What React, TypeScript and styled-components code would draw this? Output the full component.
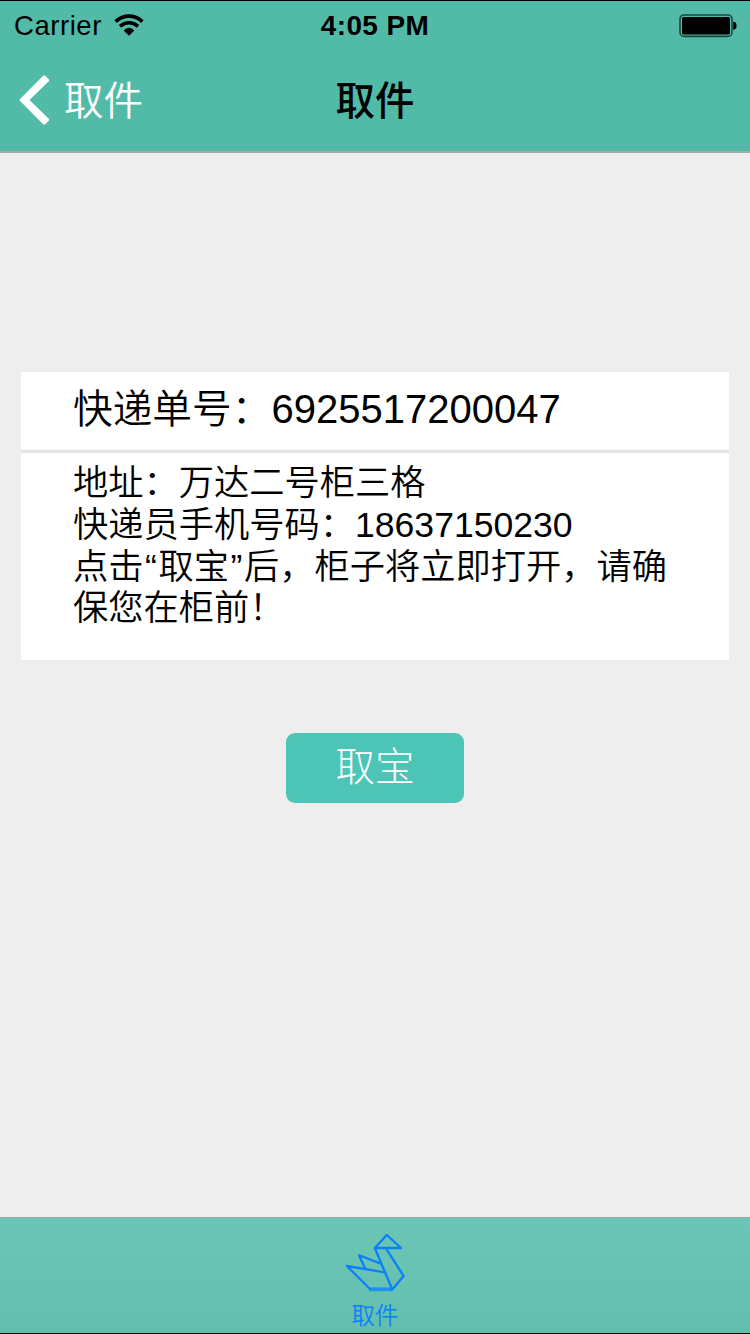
import React from 'react';
import styled, { createGlobalStyle } from 'styled-components';

const GlobalStyle = createGlobalStyle`
  * { box-sizing: border-box; }
  body {
    margin: 0;
    background: #eeeeee;
    font-family: "Liberation Sans", "Noto Sans CJK SC", sans-serif;
    color: #000;
  }
`;

const Screen = styled.div`
  width: 750px;
  height: 1334px;
  display: flex;
  flex-direction: column;
  background: #eeeeee;
  border-top: 1px solid #000;
  border-bottom: 1px solid #000;
  overflow: hidden;
`;

const Header = styled.header`
  height: 152px;
  flex: none;
  background: #51bba8;
  border-bottom: 2px solid #a5a9a8;
`;

const ThreeColumns = styled.div<{ $height: number }>`
  display: grid;
  grid-template-columns: 1fr auto 1fr;
  align-items: center;
  height: ${(p) => p.$height}px;
`;

const StatusLeft = styled.div`
  display: flex;
  align-items: center;
  gap: 12px;
  padding: 2px 0 0 14px;
  font-size: 27.5px;
  line-height: 46px;
  letter-spacing: 0.55px;

  svg {
    margin-top: -2px;
  }
`;

const Clock = styled.div`
  padding-top: 2px;
  font-size: 28px;
  line-height: 46px;
  font-weight: 700;
  letter-spacing: 0.4px;
`;

const StatusRight = styled.div`
  display: flex;
  justify-content: flex-end;
  padding: 1px 13px 0 0;
`;

const BackButton = styled.button`
  display: flex;
  align-items: center;
  gap: 14px;
  padding: 0 0 0 19px;
  border: 0;
  background: none;
  color: #fff;
  font-family: "Noto Sans CJK SC", sans-serif;
  font-size: 39.5px;
  font-weight: 350;
  line-height: 60px;
`;

const BackLabel = styled.span`
  margin-top: -4px;
`;

const Title = styled.h1`
  margin: 0;
  padding-top: 2px;
  font-size: 39.5px;
  font-weight: 500;
  line-height: 60px;
`;

const Main = styled.main`
  flex: 1;
  display: flex;
  flex-direction: column;
  align-items: center;
  padding: 219px 21px 0;
`;

const Card = styled.section`
  width: 708px;
  height: 288px;
  background: #fff;
`;

const ParcelNumber = styled.div`
  height: 77px;
  padding: 4px 0 0 52px;
  font-size: 40px;
  line-height: 60px;
  white-space: nowrap;
`;

const Divider = styled.div`
  height: 4px;
  background: linear-gradient(#f8f8f8, #e6e6e6 40%, #dedede 70%, #f2f2f2);
`;

const Details = styled.div`
  padding: 6px 0 0 52px;
  font-size: 35.6px;
`;

const Line = styled.div`
  height: 41.8px;
  line-height: 41.8px;
  white-space: nowrap;
`;

const Han = styled.span<{ $size: number }>`
  font-family: "Noto Sans CJK SC", sans-serif;
  font-size: ${(p) => p.$size}px;
  font-weight: 350;
`;

const Quote = styled.span`
  display: inline-block;
  width: 15px;
  text-align: center;
`;

const PickUpButton = styled.button`
  width: 178px;
  height: 70px;
  margin-top: 73px;
  padding: 0 0 2px;
  border: 0;
  border-radius: 9px;
  background: #4cc5b7;
  color: #fff;
  font-family: inherit;
  font-size: 39.5px;
  font-weight: 300;
  line-height: 60px;
`;

const TabBar = styled.nav`
  flex: none;
  height: 116px;
  display: flex;
  justify-content: center;
  border-top: 1px solid #9da5a3;
  background: linear-gradient(#6bc6b5, #63bead);
`;

const Tab = styled.a`
  display: flex;
  flex-direction: column;
  align-items: center;
  padding-top: 15px;
  color: #0c80fb;
  font-size: 23.5px;
  font-weight: 350;
  line-height: 30px;
`;

const TabLabel = styled.span`
  margin-top: 8px;
`;

const WifiIcon = () => (
  <svg width="30" height="22" viewBox="0 0 30 22">
    <g fill="none" stroke="#000" strokeWidth="3.6">
      <path d="M1.6 7.6Q7.5 2.1 15 2.1T28.4 7.6" />
      <path d="M6 12.4Q10 8.8 15 8.8T24 12.4" />
    </g>
    <path d="M9.6 16.4Q12 13.8 15 13.8T20.4 16.4L15 21.8Z" fill="#000" />
  </svg>
);

const BatteryIcon = () => (
  <svg width="58" height="24" viewBox="0 0 58 24">
    <rect x="1" y="1" width="52" height="21.4" rx="4" fill="none" stroke="#1d463f" strokeWidth="1.6" />
    <rect x="3" y="3" width="48" height="17.4" rx="1.5" fill="#000" />
    <path d="M54.2 7.8Q57.6 8 57.6 11.7T54.2 15.8Z" fill="#000" />
  </svg>
);

const BackIcon = () => (
  <svg width="31" height="50" viewBox="0 0 31 50">
    <path d="M24.4 .5H26L30 4.5V6L10.5 25L30 44V45.5L26 49.5H24.4L.6 25.6V24.4Z" fill="#fff" />
  </svg>
);

const SwanIcon = () => (
  <svg width="60" height="60" viewBox="0 0 60 60" fill="none" stroke="#0c80fb" strokeWidth="2.3" strokeLinejoin="round">
    <path d="M29.8 15L41.8 2L56 15Z" />
    <path d="M29.8 15L47.3 56.5L58.6 43L40.8 15" />
    <path d="M35.8 30.6L14 22.2L20 35.2" />
    <path d="M39.8 39.4L1.8 33L25 56" />
    <path d="M24 56.3H47.5" strokeWidth="3.8" strokeOpacity=".75" />
  </svg>
);

export default function App() {
  return (
    <>
      <GlobalStyle />
      <Screen>
        <Header>
          <ThreeColumns $height={48}>
            <StatusLeft>
              Carrier
              <WifiIcon />
            </StatusLeft>
            <Clock>4:05 PM</Clock>
            <StatusRight>
              <BatteryIcon />
            </StatusRight>
          </ThreeColumns>
          <ThreeColumns $height={101}>
            <BackButton>
              <BackIcon />
              <BackLabel>取件</BackLabel>
            </BackButton>
            <Title>取件</Title>
          </ThreeColumns>
        </Header>
        <Main>
          <Card>
            <ParcelNumber>
              <Han $size={39.7}>快递单号：</Han>6925517200047
            </ParcelNumber>
            <Divider />
            <Details>
              <Line>
                <Han $size={35.25}>地址：万达二号柜三格</Han>
              </Line>
              <Line>
                <Han $size={35.25}>快递员手机号码：</Han>18637150230
              </Line>
              <Line>
                <Han $size={35.25}>点击</Han>
                <Quote>“</Quote>
                <Han $size={35.25}>取宝</Han>
                <Quote>”</Quote>
                <Han $size={35.25}>后，柜子将立即打开，请确</Han>
              </Line>
              <Line>
                <Han $size={35.25}>保您在柜前！</Han>
              </Line>
            </Details>
          </Card>
          <PickUpButton>取宝</PickUpButton>
        </Main>
        <TabBar>
          <Tab>
            <SwanIcon />
            <TabLabel>取件</TabLabel>
          </Tab>
        </TabBar>
      </Screen>
    </>
  );
}
